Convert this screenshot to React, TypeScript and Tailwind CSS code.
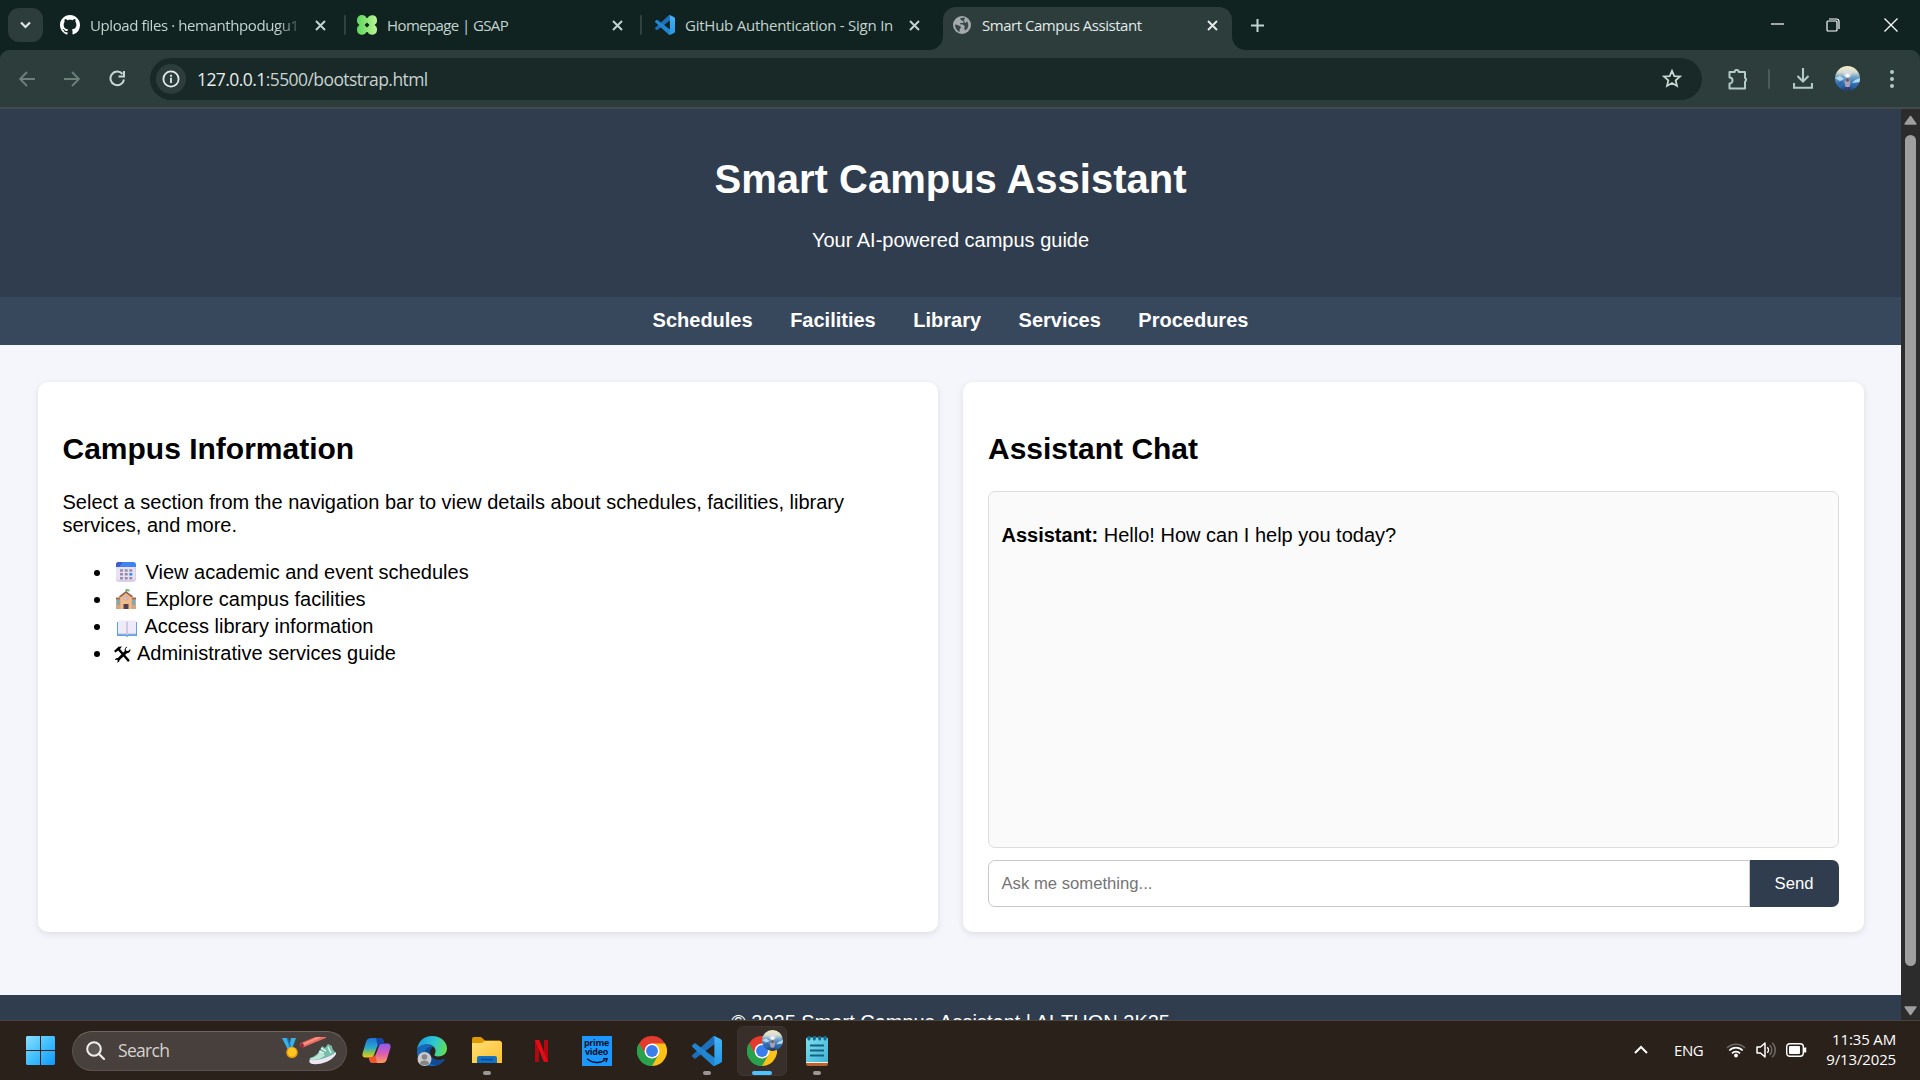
import React from 'react';

const tools = 'shrink-0 block';

function Close({ color = '#c3d3cf', size = 11 }: { color?: string; size?: number }) {
  return (
    <svg className={tools} width={size} height={size} viewBox="0 0 11 11">
      <path d="M1 1L10 10M10 1L1 10" stroke={color} strokeWidth="2" />
    </svg>
  );
}

function VsCode({ size, id }: { size: number; id: string }) {
  return (
    <svg className={tools} width={size} height={size} viewBox="0 0 100 100">
      <defs>
        <linearGradient id={id} x1="0" y1="0" x2="0" y2="1">
          <stop offset="0" stopColor="#46b4f5" />
          <stop offset="1" stopColor="#2497e6" />
        </linearGradient>
      </defs>
      <path d="M96 11L75.500 .9a6.200 6.200 0 00-7.100 1.200L1.300 63.200a4.200 4.200 0 000 6.200l5.500 5a4.200 4.200 0 005.300.2L93.300 13.400c2.700-2.100 6.700-.1 6.700 3.300v-.2A6.300 6.300 0 0096 11z" fill="#1c6fb8" />
      <path d="M96 89l-20.500 10a6.200 6.200 0 01-7.100-1.200L1.300 36.800a4.200 4.200 0 010-6.200l5.500-5a4.200 4.200 0 015.300-.2l81.200 61.200c2.700 2.100 6.700.1 6.700-3.300v.2a6.300 6.300 0 01-4 5.500z" fill="#2086d2" />
      <path d="M75.500 99.100a6.200 6.200 0 01-7.100-1.200c2.300 2.300 6.200.7 6.200-2.600V4.700c0-3.300-3.900-4.900-6.200-2.600a6.200 6.200 0 017.100-1.200L96 10.800a6.300 6.300 0 014 5.600v67.200a6.300 6.300 0 01-4 5.600z" fill={`url(#${id})`} />
    </svg>
  );
}

function Scene({ size, id }: { size: number; id: string }) {
  return (
    <svg className={tools} width={size} height={size} viewBox="0 0 25 25">
      <defs>
        <linearGradient id={id} x1="0" y1="0" x2="0" y2="1">
          <stop offset="0" stopColor="#f6edc6" />
          <stop offset=".25" stopColor="#d3dccb" />
          <stop offset=".42" stopColor="#79a8c8" />
          <stop offset=".65" stopColor="#3c7cbc" />
          <stop offset="1" stopColor="#1b4178" />
        </linearGradient>
        <clipPath id={id + 'c'}><circle cx="12.500" cy="12.500" r="12.500" /></clipPath>
      </defs>
      <g clipPath={`url(#${id}c)`}>
        <path fill={`url(#${id})`} d="M0 0h25v25H0z" />
        <path d="M0 12l5-2 4 3-4 2zM25 12l-5 2-3 3 8-1z" fill="#b7d9ee" />
        <path d="M2 18l5-3 2 4-4 3zM17 18l5 1-3 4z" fill="#2f69ab" />
        <circle cx="12.500" cy="8" r="3.800" fill="#dcd8ed" opacity=".85" />
        <circle cx="12.500" cy="9.500" r="1.800" fill="#fff" />
        <path d="M9.500 16l2-3.500h2l2 3.500-1 5h-4z" fill="#a8a3bd" />
        <path d="M11.500 12.500h2l.5 3h-3z" fill="#7b4a45" />
        <path d="M10.500 21h1.500v4h-1.500zM13.300 21h1.500v4h-1.500z" fill="#3b3552" />
      </g>
    </svg>
  );
}

function Chrome() {
  return (
    <svg className={tools} width="30" height="30" viewBox="0 0 48 48">
      <path d="M24 24L3.200 12A24 24 0 0144.800 12z" fill="#e33b2e" />
      <path d="M24 24L44.800 12A24 24 0 0124 48z" fill="#fbc116" />
      <path d="M24 24L24 48A24 24 0 013.200 12z" fill="#2aa14b" />
      <path d="M24 12h20.800L34 31z" fill="#fbc116" />
      <path d="M3.200 12L13.600 30 24 24V12z" fill="#e33b2e" />
      <path d="M3.200 12l10.400 18L24 36 34.400 30 24 48A24 24 0 013.200 12z" fill="#2aa14b" />
      <circle cx="24" cy="24" r="12" fill="#fff" />
      <circle cx="24" cy="24" r="9.500" fill="#3b7ded" />
    </svg>
  );
}

function TabBar() {
  return (
    <div className="flex h-[50px] items-center bg-[#112321] text-[15px] text-[#c3d3cf]">
      <div className="ml-2 flex h-[34px] w-[35px] items-center justify-center rounded-[11px] bg-[#2d3d3c]">
        <svg width="11" height="8" viewBox="0 0 11 8"><path d="M1 1.500L5.500 6 10 1.500" fill="none" stroke="#dbe6e3" strokeWidth="2.200" /></svg>
      </div>
      <div className="flex w-[301px] items-center pl-[17px]">
        <svg className={tools} width="20" height="20" viewBox="0 0 16 16">
          <path fill="#fff" d="M8 0C3.580 0 0 3.580 0 8c0 3.540 2.290 6.530 5.470 7.590.4.070.55-.17.55-.38 0-.19-.01-.82-.01-1.490-2.010.37-2.530-.49-2.690-.94-.09-.23-.48-.94-.82-1.130-.28-.15-.68-.52-.01-.53.63-.01 1.080.58 1.230.82.72 1.210 1.870.87 2.330.66.07-.52.28-.87.51-1.070-1.780-.2-3.640-.89-3.640-3.950 0-.87.31-1.590.82-2.150-.08-.2-.36-1.020.08-2.120 0 0 .67-.21 2.200.82.64-.18 1.320-.27 2-.27s1.360.09 2 .27c1.530-1.040 2.200-.82 2.200-.82.44 1.100.16 1.920.08 2.120.51.56.82 1.270.82 2.150 0 3.070-1.870 3.750-3.650 3.950.29.25.54.73.54 1.480 0 1.070-.01 1.930-.01 2.200 0 .21.15.46.55.38A8.010 8.010 0 0016 8c0-4.420-3.580-8-8-8z" />
        </svg>
        <div className="ml-[10px] w-[210px] overflow-hidden whitespace-nowrap tracking-[-0.4px] [mask-image:linear-gradient(to_right,black_188px,transparent_214px)]">Upload files · hemanthpodugu1</div>
        <div className="ml-[15px]"><Close /></div>
      </div>
      <div className="h-[20px] w-[2px] rounded-full bg-[#2f4441]" />
      <div className="flex w-[294px] items-center pl-[11px]">
        <svg className={tools} width="20" height="20" viewBox="0 0 20 20">
          <defs><linearGradient id="gs"><stop offset="0" stopColor="#5bd75b" /><stop offset="1" stopColor="#b9f593" /></linearGradient></defs>
          <path fill="url(#gs)" fillRule="evenodd" d="M5 0h0a5 5 0 014.500 3h1A5 5 0 0120 5a5 5 0 01-2.500 5A5 5 0 0120 15a5 5 0 01-9.500 2h-1A5 5 0 010 15a5 5 0 012.500-5A5 5 0 010 5a5 5 0 015-5zM10 7.500L7.500 10 10 12.500 12.500 10z" />
        </svg>
        <div className="ml-[10px] w-[122px] whitespace-nowrap tracking-[-0.6px]">Homepage | GSAP</div>
        <div className="ml-[103px]"><Close /></div>
      </div>
      <div className="h-[20px] w-[2px] rounded-full bg-[#2f4441]" />
      <div className="flex w-[301px] items-center pl-[13px]">
        <VsCode size={20} id="v1" />
        <div className="ml-[10px] w-[209px] whitespace-nowrap tracking-[-0.24px]">GitHub Authentication - Sign In</div>
        <div className="ml-[15px]"><Close /></div>
      </div>
      <div className="relative mt-[7px] flex h-[43px] w-[289px] items-center rounded-t-[13px] bg-[#2d3d3c] pb-[7px] pl-[10px] text-[#e2eae8]">
        <svg className="absolute bottom-0 -left-[14px]" width="14" height="14"><path d="M14 0v14H0A14 14 0 0014 0z" fill="#2d3d3c" /></svg>
        <svg className="absolute bottom-0 -right-[14px]" width="14" height="14"><path d="M0 0v14h14A14 14 0 010 0z" fill="#2d3d3c" /></svg>
        <svg className={tools} width="18" height="18" viewBox="0 0 18 18">
          <circle cx="9" cy="9" r="9" fill="#a3a9ac" />
          <path d="M2 8.500c2 0 3.200 1 4.800 1.500 1.500.5 1.500 2 .3 2.500-.6.500-.6 2-.2 3.500C4 15 2 12 2 8.500zM6.800 3c1.500-1.500 4-1.500 5.500-.8l-1.500 1.600.7 1.700-2 1.500H7.300L7 8.200l3 .3 2 2.200-1 1.800 1.500 1.700c3-2 3.700-6 1.500-9L12.700 7z" fill="#37474a" />
        </svg>
        <div className="ml-[11px] w-[160px] whitespace-nowrap tracking-[-0.47px]">Smart Campus Assistant</div>
        <div className="ml-[65px]"><Close color="#e2eae8" /></div>
      </div>
      <svg className="ml-[19px]" width="13" height="13" viewBox="0 0 13 13"><path d="M6.500 0v13M0 6.500h13" stroke="#c3d3cf" strokeWidth="2" /></svg>
      <div className="mb-[1px] ml-auto flex items-center pr-[22px]">
        <svg className="-mt-[2px] mr-[42px]" width="13" height="2"><path d="M0 1h13" stroke="#fff" strokeWidth="1.200" /></svg>
        <svg className="mr-[44px]" width="14" height="14" viewBox="0 0 14 14">
          <path d="M3 1h7.500a2.500 2.500 0 012.500 2.500V11" fill="none" stroke="#fff" strokeWidth="1.200" />
          <rect x="1" y="3" width="10" height="10" rx="1" fill="none" stroke="#fff" strokeWidth="1.200" />
        </svg>
        <svg width="14" height="14" viewBox="0 0 14 14"><path d="M.5.5l13 13M13.500.5l-13 13" stroke="#fff" strokeWidth="1.300" /></svg>
      </div>
    </div>
  );
}

function Toolbar() {
  return (
    <div className="bg-[#112321]">
      <div className="flex h-[59px] items-center rounded-t-[9px] border-b-2 border-[#444b4a] bg-[#2d3d3c]">
        <svg className="ml-[19px]" width="16" height="16" viewBox="0 0 16 16"><path d="M8 1L1 8l7 7M1 8h15" fill="none" stroke="#6d7f7b" strokeWidth="1.900" /></svg>
        <svg className="ml-[29px]" width="16" height="16" viewBox="0 0 16 16"><path d="M8 1l7 7-7 7M15 8H0" fill="none" stroke="#6d7f7b" strokeWidth="1.900" /></svg>
        <svg className="ml-[29px]" width="17" height="17" viewBox="0 0 17 17">
          <path d="M15 9.500A6.800 6.800 0 1113.500 4" fill="none" stroke="#c8d6d3" strokeWidth="2" />
          <path d="M16 1v6.500H9.500V5.500H14V1z" fill="#c8d6d3" />
        </svg>
        <div className="ml-[24px] flex h-[42px] w-[1552px] items-center rounded-full bg-[#182927] pl-[6px]">
          <div className="flex size-[30px] items-center justify-center rounded-full bg-[#2d3d3c]">
            <svg width="18" height="18" viewBox="0 0 18 18"><circle cx="9" cy="9" r="7.600" fill="none" stroke="#e2eae8" strokeWidth="1.800" /><path d="M9 7.800V13M9 4.800v2" stroke="#e2eae8" strokeWidth="1.800" /></svg>
          </div>
          <div className="mt-[2px] ml-[11px] whitespace-nowrap text-[17.5px] tracking-[-0.57px] text-[#c9d2d0]"><span className="text-[#e8eeec]">127.0.0.1</span>:5500/bootstrap.html</div>
          <svg className="mr-[20px] ml-auto" width="20" height="19" viewBox="0 0 20 19"><path d="M10 1.800l2.300 5.300 5.700.5-4.300 3.800 1.300 5.600-5-3-5 3 1.300-5.600L2 7.600l5.700-.5z" fill="none" stroke="#c8d6d3" strokeWidth="1.800" /></svg>
        </div>
        <svg className="ml-[25px]" width="22" height="22" viewBox="0 0 22 22">
          <path d="M2.500 4h5.200a2 2 0 014 0H18v6a2 2 0 010 3.600V20.500H2.500V15.500a3 3 0 000-6z" fill="none" stroke="#b4cbc5" strokeWidth="2" strokeLinejoin="round" />
        </svg>
        <div className="ml-[19px] h-[20px] w-[2px] rounded bg-[#4a5c59]" />
        <svg className="ml-[23px]" width="20" height="21" viewBox="0 0 20 21"><path d="M10 0v13M4.500 8l5.500 5.500L15.500 8M1 15v4.700h18V15" fill="none" stroke="#b4cbc5" strokeWidth="2.100" /></svg>
        <div className="ml-[22px]"><Scene size={25} id="s1" /></div>
        <svg className="ml-[30px]" width="4" height="18" viewBox="0 0 4 18"><path d="M2 2h0M2 9h0M2 16h0" stroke="#b4cbc5" strokeWidth="4" strokeLinecap="round" /></svg>
      </div>
    </div>
  );
}

function CalendarIcon() {
  return (
    <svg width="20" height="20" viewBox="0 0 20 20">
      <rect width="20" height="20" rx="3" fill="#dccdec" />
      <rect width="19" height="18" rx="3" fill="#e9e0f3" />
      <path d="M0 5V3a3 3 0 013-3h14a3 3 0 013 3v2z" fill="#3f83ee" />
      <path d="M0 5V3a3 3 0 013-3h4L3 5z" fill="#3f5bd0" />
      <path d="M4 8.500h3M8.700 8.500h3M13.300 8.500h3M4 12.300h3M8.700 12.300h3M4 16.200h3M8.700 16.200h3M13.300 16.200h3" stroke="#978fa6" strokeWidth="2.400" />
      <path d="M13.300 12.300h3" stroke="#2f8bea" strokeWidth="2.400" />
    </svg>
  );
}

function SchoolIcon() {
  return (
    <svg width="20" height="20" viewBox="0 0 20 20">
      <path d="M0 9h20v11H0z" fill="#dca37b" />
      <path d="M4.500 7L10 3l5.500 4v13h-11z" fill="#f0bb8c" />
      <path d="M0 8.500h4v2H0zM16 8.500h4v2h-4z" fill="#9a6a55" />
      <path d="M3.500 8L10 3l6.500 5" fill="none" stroke="#94624e" strokeWidth="1.600" />
      <path d="M1 11h3v5H1zM16 11h3v5h-3z" fill="#56b6e6" />
      <path d="M2.500 11v5M17.500 11v5M1 13.500h3M16 13.500h3" stroke="#c98f70" strokeWidth=".5" />
      <circle cx="10" cy="9" r="2" fill="#f5edf4" stroke="#b58476" strokeWidth=".6" />
      <path d="M10 7.800v1.500h1" fill="none" stroke="#855" strokeWidth=".6" />
      <path d="M7.500 15h5v5h-5z" fill="#51404f" />
      <path d="M10 0v3" stroke="#888" strokeWidth=".8" />
      <path d="M10 0l3.500.5v2L10 2z" fill="#62b56a" />
    </svg>
  );
}

function BookIcon() {
  return (
    <svg width="20" height="17" viewBox="0 0 20 17">
      <path d="M0 2h1v12h18V2h1v14h-8.500l-1.500 1-1.500-1H0z" fill="#5ba4e4" />
      <path d="M1 .5h7.500L10 1.500 11.500.5H19V14h-7.500L10 15l-1.500-1H1z" fill="#eeeaf7" />
      <path d="M10 1.500V15" stroke="#c2b8dc" strokeWidth="1.400" />
      <path d="M1 14h7.500l1.500 1 1.500-1H19" fill="none" stroke="#b3b5e0" strokeWidth=".9" />
    </svg>
  );
}

function ToolsIcon() {
  return (
    <svg width="17" height="17" viewBox="0 0 17 17">
      <path d="M0 5L4.500.7 8 .6 6 3l9.800 11.300-1.700 1.700L4.200 4.500 1.500 6.600z" fill="#000" />
      <path d="M13.500.8L11.500 3l.8 1.800 1.900.3 2-2c.7 2-.8 4.300-3.300 4.100L5.500 14.300c.2 1.200-1 2.500-2.700 2.300L4 15l-1-1.200-2 .3c.2-1.500 1.500-2.500 2.900-2L10.700 5C10.300 2.700 11.700.8 13.500.8z" fill="#000" />
    </svg>
  );
}

const items = [
  { icon: <CalendarIcon />, wrap: 'mr-[10px] ml-[2px] w-5 -mt-px', text: 'View academic and event schedules' },
  { icon: <SchoolIcon />, wrap: 'mr-[10px] ml-[2px] w-5 -mt-px', text: 'Explore campus facilities' },
  { icon: <BookIcon />, wrap: 'mt-[3px] mr-[8px] ml-[3px] w-5', text: 'Access library information' },
  { icon: <ToolsIcon />, wrap: 'mr-[6.5px] mt-[1px] w-[17px]', text: 'Administrative services guide' },
];

function Page() {
  return (
    <div className="flex h-[911px] bg-[#2c2c2c]">
      <div className="flex w-[1901px] flex-col overflow-hidden bg-[#f4f6fb] font-['Liberation_Sans',Arial,sans-serif] text-[20px] text-black">
        <header className="h-[188px] shrink-0 bg-[#303d4e] pt-[47px] text-center text-white">
          <h1 className="text-[40px] leading-[46px] font-bold">Smart Campus Assistant</h1>
          <p className="mt-[27px] leading-[23px]">Your AI-powered campus guide</p>
        </header>
        <nav className="flex h-[48px] shrink-0 justify-center gap-[37.5px] bg-[#37485d] pt-[12px] leading-[23px] font-bold text-white">
          <a>Schedules</a><a>Facilities</a><a>Library</a><a>Services</a><a>Procedures</a>
        </nav>
        <main className="flex h-[650px] shrink-0 gap-[25px] px-[37.5px] pt-[37px] pb-[63px]">
          <section className="flex-1 rounded-[10px] bg-white px-[25px] pt-[50px] shadow-[0_2px_7px_rgba(0,0,0,0.1)]">
            <h2 className="text-[30px] leading-[34px] font-bold">Campus Information</h2>
            <p className="mt-[25px] w-[820px] leading-[23px]">Select a section from the navigation bar to view details about schedules, facilities, library services, and more.</p>
            <ul className="mt-[22px]">
              {items.map((it) => (
                <li key={it.text} className="flex h-[27px] items-center pl-[31px] leading-[27px] whitespace-nowrap">
                  <span className="mt-[1px] mr-[14px] size-[6px] rounded-full bg-black" />
                  <span className={it.wrap}>{it.icon}</span>
                  <span>{it.text}</span>
                </li>
              ))}
            </ul>
          </section>
          <section className="flex-1 rounded-[10px] bg-white px-[25px] pt-[50px] shadow-[0_2px_7px_rgba(0,0,0,0.1)]">
            <h2 className="text-[30px] leading-[34px] font-bold">Assistant Chat</h2>
            <div className="mt-[25px] h-[357px] rounded-[7px] border border-[#dddddd] bg-[#fafafa] px-[12.5px] pt-[32px] leading-[23px]">
              <strong>Assistant:</strong> Hello! How can I help you today?
            </div>
            <div className="mt-[12px] flex h-[47px] text-[16.67px]">
              <div className="flex flex-1 items-center rounded-l-[7px] border border-[#c8c8c8] bg-white pl-[12.5px] text-[#757575]">Ask me something...</div>
              <button className="w-[89px] rounded-r-[7px] bg-[#303d4e] text-white">Send</button>
            </div>
          </section>
        </main>
        <footer className="h-[78px] shrink-0 bg-[#303d4e] pt-[16px] text-center leading-[23px] text-white">© 2025 Smart Campus Assistant | AI-THON 2K25</footer>
      </div>
      <div className="flex w-[19px] flex-col items-center">
        <svg className="mt-[6px]" width="13" height="10" viewBox="0 0 13 10"><path d="M6.500 1.500L11.800 9H1.200z" fill="#9f9f9f" stroke="#9f9f9f" strokeWidth="1.600" strokeLinejoin="round" /></svg>
        <div className="mt-[10px] h-[831px] w-[11px] rounded-full bg-[#9f9f9f]" />
        <svg className="mt-[40px]" width="13" height="10" viewBox="0 0 13 10"><path d="M6.500 8.500L11.800 1H1.200z" fill="#9f9f9f" stroke="#9f9f9f" strokeWidth="1.600" strokeLinejoin="round" /></svg>
      </div>
    </div>
  );
}

function SearchArt() {
  return (
    <svg className={tools} width="56" height="28" viewBox="0 0 56 28">
      <path d="M0 1h5l4 10-3 2zM9 1h5l-4 11-3-2z" fill="#35b3e8" />
      <path d="M4.500 1H6l3 8-1.500 1z" fill="#1976c8" />
      <circle cx="10" cy="15.500" r="5.800" fill="#e39a0c" /><circle cx="10" cy="15" r="4.500" fill="#ffc420" />
      <path d="M20.500 8L42-1" stroke="#ef6a62" strokeWidth="5" strokeLinecap="round" />
      <path d="M20 8L41-1.500" stroke="#ff9b84" strokeWidth="1.500" />
      <ellipse cx="20" cy="8.500" rx="1.800" ry="2.500" fill="#8d2740" />
      <path d="M28 21c5-1 10-6 12-12l3 2 3-4 4 2c0 4 3 5 4 8-2 5-12 9-24 9-3-1-3-3-2-5z" fill="#75bda9" />
      <path d="M28 21c5 0 8-3 10-7l5 4c-3 4-8 5-14 5z" fill="#bce4d6" />
      <path d="M37 14l5 2M39 11l5 3M46 10l3 6" stroke="#f2fffb" strokeWidth="1.200" />
      <path d="M28 23c10 1 20-3 26-8v2c-4 7-14 11-24 10-3-1-3-3-2-4z" fill="#eee6f0" />
    </svg>
  );
}

function Slot({ children, ind = '', active = false }: { children: React.ReactNode; ind?: string; active?: boolean }) {
  return (
    <div className="flex w-[55px] justify-center">
      <div className={active ? 'relative flex h-[50px] w-[50px] items-center justify-center rounded-[6px] border border-[#40362f] bg-[#382e2a]' : 'relative flex h-[50px] w-[50px] items-center justify-center'}>
        {children}
        {ind && <span className={ind} />}
      </div>
    </div>
  );
}

const dot = 'absolute bottom-px left-[21px] h-[4px] w-[8px] rounded-full bg-[#9b9694]';

function Taskbar() {
  return (
    <div className="flex h-[60px] items-center border-t border-[#4a443e] bg-[#2b211b] text-white">
      <svg className="ml-[26px]" width="29" height="29" viewBox="0 0 29 29">
        <defs><linearGradient id="win" x1="0" y1="0" x2="1" y2="1"><stop offset="0" stopColor="#8be0ff" /><stop offset=".5" stopColor="#41bfff" /><stop offset="1" stopColor="#0f98fb" /></linearGradient></defs>
        <path fill="url(#win)" d="M1 0h13v14H0V1zM15 0h13l1 1v13H15zM0 15h14v14H1l-1-1zM15 15h14v13l-1 1H15z" />
      </svg>
      <div className="mr-[10px] ml-[17px] flex h-[40px] w-[275px] items-center rounded-full border border-[#5a524e] border-t-[#6c6561] bg-[#48403c] pl-[13px]">
        <svg width="19" height="19" viewBox="0 0 19 19"><circle cx="8" cy="8" r="6.800" fill="#5d5653" stroke="#f0eeed" strokeWidth="2" /><path d="M13 13l5 5" stroke="#f0eeed" strokeWidth="2.200" strokeLinecap="round" /></svg>
        <div className="ml-[13px] w-[52px] text-[17.5px] tracking-[-0.7px] text-[#d5d1cf]">Search</div>
        <div className="ml-[112px]"><SearchArt /></div>
      </div>
      <div className="flex items-center -ml-[8px]">
        <Slot>
          <svg width="29" height="27" viewBox="0 0 29 27">
            <defs>
              <linearGradient id="c1" x1="0" y1="0" x2="0" y2="1"><stop offset="0" stopColor="#1d74d8" /><stop offset=".5" stopColor="#28a9cf" /><stop offset=".75" stopColor="#8bc34b" /><stop offset="1" stopColor="#ecc81c" /></linearGradient>
              <linearGradient id="c2" x1="0" y1="0" x2="0" y2="1"><stop offset="0" stopColor="#8a5cf0" /><stop offset=".5" stopColor="#d95bb5" /><stop offset="1" stopColor="#ff9a55" /></linearGradient>
            </defs>
            <path d="M9 1h9c2 0 3 1 3.500 3L22 7h-3c-2 0-3 1-4 3l-3 8c-1 2-2 2.500-4 2.500H3c-2 0-3-2-2.500-4L4 5c1-3 2.500-4 5-4z" fill="url(#c1)" />
            <path d="M20 26h-9c-2 0-3-1-3.500-3L7 20h3c2 0 3-1 4-3l3-8c1-2 2-2.500 4-2.500h5c2 0 3 2 2.500 4L25 22c-1 3-2.500 4-5 4z" fill="url(#c2)" />
            <path d="M14 1h4c2 0 3 1 3.500 3L22 7h-3c-1.500 0-2.500.7-3.300 2z" fill="#1746a8" />
            <path d="M15 26h-4c-2 0-3-1-3.500-3L7 20h3c1.500 0 2.500-.7 3.300-2z" fill="#f2552c" />
          </svg>
        </Slot>
        <Slot>
          <svg width="30" height="30" viewBox="0 0 30 30">
            <defs><linearGradient id="e1" x1="0" y1=".3" x2="1" y2=".5"><stop offset="0" stopColor="#1a9be0" /><stop offset=".55" stopColor="#2cc7d6" /><stop offset="1" stopColor="#62dd54" /></linearGradient></defs>
            <path d="M0 15C0 27 9 31 17 30c5-.7 9-3.500 11-7-6 2.500-13 1-15-5-.8-3 .5-5.500 3-7C11 6 2 8 0 15z" fill="#1668bd" />
            <path d="M8 17c0 8 6 13 13 12 3-1 5.500-3.200 7-6-6 2.500-13 1-15-5-.8-3 .5-5.500 3-7-4-1-8 2-8 6z" fill="#124a94" />
            <path d="M0 14C1 5 7 0 15 0c9 0 15 6 15 12.500 0 5-4 8-9 8-3 0-4-1.200-3.500-2 2-2.500 1.500-7.500-3.500-9.500C9 7 2 9 0 14z" fill="url(#e1)" />
            <circle cx="7.500" cy="23" r="7" fill="#c9c9c9" /><circle cx="7.500" cy="21" r="2.800" fill="#858585" /><path d="M3 27.500c0-4 9-4 9 0-2 2-7 2-9 0z" fill="#858585" />
          </svg>
        </Slot>
        <Slot ind={dot}>
          <svg width="30" height="27" viewBox="0 0 30 27">
            <defs><linearGradient id="f1" x1="0" y1="0" x2="1" y2="1"><stop offset="0" stopColor="#ffdf76" /><stop offset="1" stopColor="#fcc02c" /></linearGradient></defs>
            <path d="M0 2a2 2 0 012-2h7l4 3.500h15V9H0z" fill="#dd9a05" />
            <path d="M0 6h10l3-2h15.500L30 5.500V26H0z" fill="url(#f1)" />
            <path d="M5 26v-5a2 2 0 012-2h16a2 2 0 012 2v5z" fill="#1272c6" /><path d="M9 22.500h12" stroke="#0a4b8e" strokeWidth="1.500" />
          </svg>
        </Slot>
        <Slot>
          <svg width="13" height="22" viewBox="0 0 13 22"><path d="M0 0h4v22l-4-.2zM9 0h4v22l-4-.3z" fill="#b10912" /><path d="M0 0h4.300L13 22l-4.300-.4z" fill="#e50b17" /></svg>
        </Slot>
        <Slot>
          <div className="flex size-[30px] flex-col items-center bg-[#1a98ff] pt-[2px] text-[9px] leading-[9px] font-bold tracking-[-0.3px] text-[#08131f]">
            <span>prime</span><span>video</span>
            <svg className="mt-[2px]" width="22" height="6" viewBox="0 0 22 6"><path d="M1 .8c5 4.500 13 5 18 1.200M17 .8h4l-1 3.500" fill="none" stroke="#08131f" strokeWidth="1.400" /></svg>
          </div>
        </Slot>
        <Slot><Chrome /></Slot>
        <Slot ind={dot}><VsCode size={30} id="v2" /></Slot>
        <Slot active ind="absolute bottom-0 left-[14px] h-[4px] w-[20px] rounded-full bg-[#4cc2ff]">
          <Chrome />
          <div className="absolute top-[3px] right-[3px]"><Scene size={21} id="s2" /></div>
        </Slot>
        <Slot ind={dot}>
          <svg width="22" height="30" viewBox="0 0 22 30">
            <defs><linearGradient id="n1" x1="0" y1="0" x2="1" y2="1"><stop offset="0" stopColor="#7fe0f2" /><stop offset="1" stopColor="#3fb2d4" /></linearGradient></defs>
            <path d="M0 25h22v3a2 2 0 01-2 2H2a2 2 0 01-2-2z" fill="#b8632d" /><path d="M0 24h22v3H0z" fill="#f1efee" />
            <path d="M0 3a1.500 1.500 0 011.500-1.500h19A1.500 1.500 0 0122 3v23H0z" fill="url(#n1)" />
            <path d="M3 1v2M8.300 1v2M13.700 1v2M19 1v2" stroke="#136a8d" strokeWidth="3" strokeLinecap="round" />
            <path d="M4 9.500h14M4 14.500h14M4 19.500h14" stroke="#14617f" strokeWidth="1.900" />
          </svg>
        </Slot>
      </div>
      <div className="ml-auto flex items-center pr-[24px] text-[15px]">
        <svg className="-mt-[2px]" width="14" height="9" viewBox="0 0 14 9"><path d="M1 8l6-6 6 6" fill="none" stroke="#fff" strokeWidth="2" /></svg>
        <div className="ml-[26px] w-[30px] tracking-[-0.4px]">ENG</div>
        <svg className="-mt-px ml-[22px]" width="20" height="16" viewBox="0 0 20 16">
          <path d="M1 6a12.500 12.500 0 0118 0" fill="none" stroke="#6f6864" strokeWidth="1.500" />
          <path d="M3.300 8.500a9.300 9.300 0 0113.400 0M6 11.300a5.600 5.600 0 018 0" fill="none" stroke="#fff" strokeWidth="1.700" />
          <circle cx="10" cy="13.500" r="1.900" fill="#fff" />
        </svg>
        <svg className="-mt-px ml-[10px]" width="20" height="18" viewBox="0 0 20 18">
          <path d="M1 6h3.500L9 2v14l-4.500-4H1z" fill="none" stroke="#fff" strokeWidth="1.500" strokeLinejoin="round" />
          <path d="M11.300 6.200a4 4 0 010 5.600" fill="none" stroke="#fff" strokeWidth="1.500" />
          <path d="M13.700 4a7 7 0 010 10M16.200 1.700a10.300 10.300 0 010 14.600" fill="none" stroke="#6f6864" strokeWidth="1.500" />
        </svg>
        <svg className="-mt-px ml-[10px]" width="21" height="14" viewBox="0 0 21 14">
          <rect x=".7" y=".7" width="16.600" height="12.600" rx="3" fill="none" stroke="#fff" strokeWidth="1.400" /><rect x="3" y="3" width="11" height="8" rx="1" fill="#fff" /><path d="M19 4.500v5" stroke="#fff" strokeWidth="2.500" />
        </svg>
        <div className="-mt-[3px] ml-[19px] w-[70px] text-right leading-[20px] tracking-[-0.15px] whitespace-nowrap">
          <div>11:35 AM</div><div>9/13/2025</div>
        </div>
      </div>
    </div>
  );
}

export default function App() {
  return (
    <div className="h-[1080px] w-[1920px] overflow-hidden font-['Open_Sans','Noto_Sans',sans-serif]">
      <TabBar />
      <Toolbar />
      <Page />
      <Taskbar />
    </div>
  );
}
